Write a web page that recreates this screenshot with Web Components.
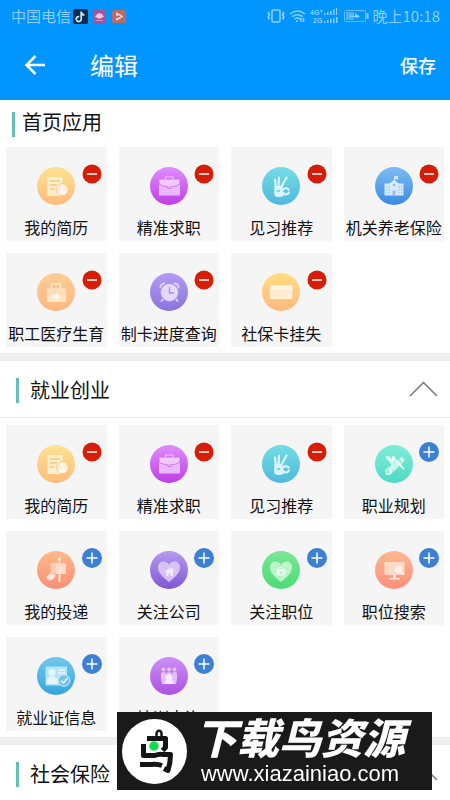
<!DOCTYPE html>
<html lang="zh-CN">
<head>
<meta charset="utf-8">
<meta name="viewport" content="width=device-width, initial-scale=1">
<title>编辑</title>
<style>
  html {
    scrollbar-width: none;
  }
  body {
    margin: 0;
    background: #fff;
    color: #111;
    font-family: "Noto Sans CJK SC", sans-serif;
    font-size: 16px;
  }
</style>
</head>
<body>
<status-bar></status-bar>
<app-bar>编辑</app-bar>
<main>
  <app-section>
    <span slot="title">首页应用</span>
    <app-tile icon="resume" added>我的简历</app-tile>
    <app-tile icon="briefcase" added>精准求职</app-tile>
    <app-tile icon="hand" added>见习推荐</app-tile>
    <app-tile icon="building" added>机关养老保险</app-tile>
    <app-tile icon="medical" added>职工医疗生育</app-tile>
    <app-tile icon="clock" added>制卡进度查询</app-tile>
    <app-tile icon="card" added>社保卡挂失</app-tile>
  </app-section>
  <app-section collapsible>
    <span slot="title">就业创业</span>
    <app-tile icon="resume" added>我的简历</app-tile>
    <app-tile icon="briefcase" added>精准求职</app-tile>
    <app-tile icon="hand" added>见习推荐</app-tile>
    <app-tile icon="plan">职业规划</app-tile>
    <app-tile icon="mailbox">我的投递</app-tile>
    <app-tile icon="company">关注公司</app-tile>
    <app-tile icon="job">关注职位</app-tile>
    <app-tile icon="monitor">职位搜索</app-tile>
    <app-tile icon="idcard">就业证信息</app-tile>
    <app-tile icon="people">培训查询</app-tile>
  </app-section>
  <app-section collapsible>
    <span slot="title">社会保险</span>
  </app-section>
</main>
<site-mark>
  下载鸟资源
  <span slot="url">www.xiazainiao.com</span>
</site-mark>

<script>
// Each icon: gradient top, gradient bottom, artwork on a 38x38 disc
const ICONS = {
  resume: ['#ffe292', '#fdbb7c', `
    <path d="M10.500 10h15v19h-15z" fill="#fff3dc"/>
    <path d="M13 14h10M13 18h7M13 22h4" stroke="#f5c67c" stroke-width="1.300"/>
    <circle cx="25.500" cy="22.500" r="6" fill="#fff0d2" stroke="#f6c481" stroke-width=".8"/>
    <circle cx="25.500" cy="20.500" r="2.200" fill="#fff"/>
    <path d="M21.500 26c0-4.500 8-4.500 8 0-2 2.500-6 2.500-8 0z" fill="#fff"/>`],
  briefcase: ['#dd8dfc', '#c03ee6', `
    <path d="M15.500 12.500v-2.500h7.500v2.500" fill="none" stroke="#f3d3fc" stroke-width="1.200"/>
    <path d="M9 12.500h21v16H9z" fill="#f0c9fa"/>
    <path d="M9 13v4c6 4 15 4 21 0v-4" fill="#f5d9fc" stroke="#c26ae0" stroke-width=".8"/>
    <path d="M17.800 19.500v2h3v-2" fill="#f5d9fc" stroke="#c26ae0" stroke-width=".8"/>`],
  hand: ['#72dde5', '#4eb9dd', `
    <g fill="none" stroke="#eefcff" stroke-linecap="round">
      <path d="M14 21L13 12.500M16.500 20L17 10.500M19 20.500L24.500 10.500" stroke-width="2.200"/>
      <path d="M27 25.500c-1 2-3.500 2.500-5.500 1M26.500 22.500c-1.500-2-4.500-2-6 .5" stroke-width="2.300"/>
    </g>
    <path d="M12.500 19h8.500c-1 3-1 5 1.500 7 .5 2.500-2 4-5.500 4-4.500 0-5-2-4.800-5z" fill="#eefcff"/>
    <path d="M16.500 25.500c-3-2.300-1.500-3.700 0-2.200 1.500-1.500 3 0 0 2.200z" fill="#6fd2e3"/>`],
  building: ['#7dbdf3', '#398be2', `
    <path d="M19.500 14V9.500h3.500l-1 1.300 1 1.200h-3.500" fill="#d8f1ff" stroke="#fff" stroke-width=".7"/>
    <path d="M9.500 16.500h4.500l5-3.500 5 3.500h4.500v12h-19z" fill="#eaf6ff"/>
    <path d="M12 19v7.500M14.500 19v7.500M24 19v7.500M26.500 19v7.500" stroke="#a8d1f5" stroke-dasharray="2 1"/>
    <path d="M17.500 28.500v-4q1.500-2 3 0v4z" fill="#9bcaf4"/>
    <circle cx="19" cy="18" r="1.300" fill="#8ac3f3"/>`],
  medical: ['#fdce98', '#fdb681', `
    <path d="M14.500 15v-4h9v4" fill="none" stroke="#fff0dc" stroke-width="1.300"/>
    <path d="M10 15h19v14H10z" fill="#ffecd8"/>
    <path d="M10 15h19v7H10z" fill="#ffe2c2"/>
    <path d="M19.500 20v7M16 23.500h7" stroke="#fff" stroke-width="2.400"/>`],
  clock: ['#b49bf4', '#8a73dc', `
    <path d="M10.500 14.500q0-3.500 4-4M28.500 14.500q0-3.500-4-4" fill="none" stroke="#e5dcff" stroke-width="2" stroke-linecap="round"/>
    <path d="M13 26l-1.500 2M26 26l1.500 2" stroke="#e5dcff" stroke-width="2" stroke-linecap="round"/>
    <circle cx="19.500" cy="19.500" r="9" fill="#eee7ff" stroke="#a38be7" stroke-width=".8"/>
    <path d="M19.500 14v6h4.500" fill="none" stroke="#aa94e6" stroke-width="1.300"/>`],
  card: ['#ffdd80', '#fdb980', `
    <rect x="8" y="13.500" width="22.500" height="14" rx="1" fill="#eeb375"/>
    <rect x="8" y="12.500" width="22.500" height="14" rx="1" fill="#fff3df"/>
    <path d="M8 13.500q0-1 1-1h20.500q1 0 1 1V17H8z" fill="#fffaf0"/>
    <circle cx="24" cy="22.500" r="1.500" fill="#ffe8c1"/><circle cx="26" cy="22.500" r="1.500" fill="#fff"/>`],
  plan: ['#7eeed8', '#4edac4', `
    <path d="M10 25l13-10 4-3.500 3 4L15 30h-4z" fill="#d7fbf2"/>
    <path d="M13 25v3M16 23.500l2 2.500M24 15l2 2.500" stroke="#65d9c7"/>
    <path d="M10.500 10.500l4 1 5 6-2.500 2-5.500-5.500z" fill="#e8fff9"/>
    <path d="M18.500 13.500L17 21l-1 7M18.500 13.500L29 24" fill="none" stroke="#f4fffc" stroke-width="1.800"/>
    <circle cx="18.500" cy="13" r="2" fill="#fff"/>`],
  mailbox: ['#ffb989', '#f99074', `
    <path d="M16 12h11q2 0 2 2v9H16z" fill="#ffe5d8"/>
    <path d="M13.500 13q4-2 5.500 2v8h-5.500z" fill="#ffd3c0"/>
    <path d="M22.500 7v5" stroke="#ffe5d8" stroke-width="1.500"/><circle cx="22.500" cy="8" r="1.700" fill="#fff0e8"/>
    <path d="M22.500 17v14" stroke="#fff0e8" stroke-width="2"/>
    <path d="M9 26l4-4 6 1-1 4-5 3q-4-1-4-4z" fill="#fff0e8" stroke="#f6a583" stroke-width=".7"/>`],
  company: ['#b49dee', '#8056d5', `
    <path d="M19 31C13 26 8 22 8 16.500 8 9 17 9 19 14c2-5 11-5 11 2.500C30 22 25 26 19 31z" fill="#e2cef8"/>
    <path d="M14.500 21l5-4 1.500 1v-1h2v3l1.500 1H23v4h-2.500v-2.500h-2V25H16v-4z" fill="#fff"/>`],
  job: ['#79e797', '#4cdc75', `
    <path d="M19 31C13 26 8 22 8 16.500 8 9 17 9 19 14c2-5 11-5 11 2.500C30 22 25 26 19 31z" fill="#ccf7d5"/>
    <rect x="14.500" y="18" width="9" height="6.500" fill="#fff"/>
    <path d="M17 18v-1.500h4V18" fill="none" stroke="#fff"/>
    <path d="M19 23l-1.500-1.500q.8-1.500 1.500 0 .8-1.500 1.500 0z" fill="#a9edba"/>`],
  monitor: ['#fdb991', '#fd8e7d', `
    <path d="M9.500 11h20v13h-20z" fill="#ffe3d3"/>
    <path d="M18 24h3v3h4v1.500H14V27h4z" fill="#fff3eb"/>
    <circle cx="23.500" cy="18.500" r="3.500" fill="#fff"/>
    <path d="M26 21l2.500 2.500" stroke="#fff" stroke-width="1.800"/>`],
  idcard: ['#73c8ee', '#35a6dc', `
    <path d="M8.500 9.500H30v19H8.500z" fill="#c3eafa"/>
    <circle cx="15" cy="15.500" r="3.500" fill="#fff"/>
    <path d="M9.500 27v-3q0-4.500 5.500-4.500t5.500 4.500v3z" fill="#fff"/>
    <path d="M21 13h7M21 16h7" stroke="#fff" stroke-width="1.300"/>
    <circle cx="27" cy="23.500" r="5.800" fill="#7cc4e8" stroke="#e8f9ff"/>
    <path d="M24 23.500l2.500 2.500 4-5" fill="none" stroke="#fff" stroke-width="1.500"/>`],
  people: ['#cb91f5', '#ac51e2', `
    <g fill="#ebcdfc">
      <circle cx="13.500" cy="12.500" r="2"/><circle cx="19" cy="12.500" r="2"/><circle cx="24.500" cy="12.500" r="2"/>
      <path d="M11 16q2.500-2 5 0v6l-1 5h-3l-1-5zM16.500 16q2.500-2 5 0v6h-5zM22 16q2.500-2 5 0v6l-1 5h-3l-1-5z"/>
    </g>
    <circle cx="19" cy="20.500" r="3.500" fill="#fff"/>
    <path d="M14.500 27q0-5 4.500-5t4.500 5z" fill="#fff"/>`]
};

class StatusBar extends HTMLElement {
  constructor() {
    super();
    this.attachShadow({ mode: 'open' });
  }

  connectedCallback() {
    this.shadowRoot.innerHTML = `
      <style>
        :host {
          display: flex;
          align-items: center;
          justify-content: space-between;
          height: 32px;
          padding: 0 10px 0 11px;
          background: #0095ff;
          color: #8dcfff;
          font-size: 15px;
          line-height: 24px;
        }
        .side {
          display: flex;
          align-items: center;
          gap: 4px;
        }
        svg {
          display: block;
        }
        .apps {
          display: flex;
          gap: 5px;
          margin-left: -2px;
        }
      </style>
      <div class="side">
        <span>中国电信</span>
        <div class="apps">
          <svg width="15" height="15" viewBox="0 0 15 15">
            <rect width="15" height="15" rx="2" fill="#0b2b51"/>
            <path d="M8.200 2.500v7.500a2.500 2.500 0 1 1-2-2.400M8.200 3q.6 3 3.300 3" fill="none" stroke="#c9eefa" stroke-width="1.700"/>
          </svg>
          <svg width="14" height="15" viewBox="0 0 14 15">
            <rect y="1" width="13" height="13" rx="2" fill="#a35598"/>
            <path d="M6.500 9L2.500 7M6.500 9L4 5M6.500 9V4M6.500 9L9 5M6.500 9l4-2" stroke="#f2c8e6" stroke-width="1.700"/>
            <path d="M3 11.500h7" stroke="#d091bd"/>
          </svg>
          <svg width="14" height="15" viewBox="0 0 14 15">
            <rect y="1" width="14" height="13" rx="2" fill="#b66c6b"/>
            <path d="M5 7V4.500l5 3-5 3V9" fill="none" stroke="#ffe5dd" stroke-width="1.400"/>
          </svg>
        </div>
      </div>
      <div class="side">
        <svg width="18" height="16" viewBox="0 0 18 16" fill="none" stroke="currentColor" stroke-width="1.500">
          <rect x="5" y="2" width="8" height="12" rx="1"/>
          <path d="M2.500 4l-1.500 1.500 1.500 1.500L1 8.500 2.500 10 1 11.500M15.500 4L17 5.500 15.500 7 17 8.500 15.500 10l1.500 1.500"/>
        </svg>
        <svg width="17" height="16" viewBox="0 0 17 16" fill="none" stroke="currentColor" stroke-width="1.600">
          <path d="M1 6q7.500-6 15 0M3.300 8.700q5.200-4 10.400 0M5.800 11q2.700-2 5.400 0"/>
          <path d="M7 13.300h2M12 10v4M14.500 10v4"/>
        </svg>
        <svg width="28" height="18" viewBox="0 0 28 18" fill="currentColor">
          <text x="0" y="8" font-family="Liberation Sans" font-size="7" font-weight="bold">4G</text>
          <path d="M10 4h3M11.500 2.500v3" stroke="currentColor" stroke-width=".8"/>
          <text x="3" y="16" font-family="Liberation Sans" font-size="7" font-weight="bold">2G</text>
          <path d="M14 6h1.500v2H14zM17 5h1.500v3H17zM20 4h1.500v4H20zM23 2h1.500v6H23zM26 1h1v7h-1zM14 14h1.500v2H14zM17 13h1.500v3H17zM20 12h1.500v4H20zM23 11h1.500v5H23zM26 10h1.500v6H26z"/>
        </svg>
        <svg width="27" height="16" viewBox="0 0 27 16" fill="none" stroke="currentColor">
          <rect x="2.500" y="2.500" width="21" height="11" rx="1" stroke="#66beff"/>
          <path d="M4 4h8v8H4z" fill="#48b2ff" stroke="none"/>
          <path d="M8 7.500l5 .5V5l5 3.500-4 2V9H8z" fill="currentColor" stroke="none"/>
          <path d="M25.500 5v6" stroke-width="2"/>
        </svg>
        <span>晚上10:18</span>
      </div>
    `;
  }
}

class AppBar extends HTMLElement {
  constructor() {
    super();
    this.attachShadow({ mode: 'open' });
  }

  connectedCallback() {
    this.shadowRoot.innerHTML = `
      <style>
        :host {
          display: block;
          background: #0095ff;
          color: #fff;
        }
        header {
          display: flex;
          align-items: center;
          height: 68px;
          padding: 0 14px 0 24px;
        }
        h1 {
          flex: 1;
          margin: 0 0 2px 44px;
          font-size: 24px;
          font-weight: 400;
          line-height: 36px;
        }
        button {
          padding: 0;
          border: 0;
          background: none;
          color: inherit;
          font: inherit;
          font-size: 18px;
          font-weight: 500;
          line-height: 26px;
          cursor: pointer;
        }
        .save {
          margin-bottom: 2px;
        }
        svg {
          display: block;
        }
      </style>
      <header>
        <button type="button" aria-label="返回">
          <svg width="22" height="22" viewBox="0 0 22 22" fill="none" stroke="#fff" stroke-width="2.500">
            <path d="M21 10H3M11.500 1l-9 9 9 9"/>
          </svg>
        </button>
        <h1><slot></slot></h1>
        <button class="save" type="button">保存</button>
      </header>
    `;
  }
}

class AppSection extends HTMLElement {
  constructor() {
    super();
    this.attachShadow({ mode: 'open' });
  }

  connectedCallback() {
    const collapsible = this.hasAttribute('collapsible');

    this.shadowRoot.innerHTML = `
      <style>
        :host {
          display: block;
        }
        :host([collapsible]) {
          border-top: 8px solid #efefef;
        }
        .head {
          display: flex;
          align-items: center;
          height: 47px;
          padding: 0 12px;
        }
        :host([collapsible]) .head {
          height: 56px;
          padding: 0 12px 0 16px;
          border-bottom: 1px solid #ececec;
        }
        .head::before {
          content: "";
          width: 3px;
          height: 25px;
          margin-top: 2px;
          background: #67bfba;
        }
        h2 {
          flex: 1;
          margin: 0 0 3px 7px;
          font-size: 20px;
          font-weight: 400;
          line-height: 28px;
        }
        :host([collapsible]) h2 {
          margin: 2px 0 0 11px;
        }
        button {
          padding: 0;
          border: 0;
          background: none;
          cursor: pointer;
        }
        button[aria-expanded="false"] svg {
          transform: rotate(180deg);
        }
        svg {
          display: block;
        }
        .grid {
          display: grid;
          grid-template-columns: repeat(4, 1fr);
          gap: 12px;
          padding: 0 6px 6px;
        }
        :host([collapsible]) .grid {
          padding-top: 7px;
        }
        .grid[hidden] {
          display: none;
        }
      </style>
      <section>
        <div class="head">
          <h2><slot name="title"></slot></h2>
          ${collapsible ? `
            <button type="button" aria-label="展开或收起" aria-expanded="true">
              <svg width="29" height="16" viewBox="0 0 29 16" fill="none" stroke="#777" stroke-width="1.500">
                <path d="M1 15L14.500 1.500 28 15"/>
              </svg>
            </button>` : ''}
        </div>
        <div class="grid"><slot></slot></div>
      </section>
    `;

    if (collapsible) {
      this.shadowRoot.querySelector('button').addEventListener('click', this.toggle.bind(this));
    }
  }

  toggle(event) {
    const grid = this.shadowRoot.querySelector('.grid');
    grid.hidden = !grid.hidden;
    event.currentTarget.setAttribute('aria-expanded', String(!grid.hidden));
  }
}

class AppTile extends HTMLElement {
  constructor() {
    super();
    this.attachShadow({ mode: 'open' });
  }

  connectedCallback() {
    this.render();
  }

  render() {
    const added = this.hasAttribute('added');
    const [top, bottom, art] = ICONS[this.getAttribute('icon')];

    this.shadowRoot.innerHTML = `
      <style>
        :host {
          display: flex;
          flex-direction: column;
          align-items: center;
          gap: 10px;
          position: relative;
          box-sizing: border-box;
          min-width: 0;
          padding: 20px 0 2px;
          background: #f5f5f5;
          line-height: 24px;
          white-space: nowrap;
        }
        svg {
          display: block;
        }
        button {
          position: absolute;
          top: 17px;
          right: 5px;
          padding: 0;
          border: 0;
          background: none;
          cursor: pointer;
        }
      </style>
      <svg width="38" height="38" viewBox="0 0 38 38">
        <defs>
          <linearGradient id="disc" x2="0" y2="1">
            <stop stop-color="${top}"/>
            <stop offset="1" stop-color="${bottom}"/>
          </linearGradient>
        </defs>
        <circle cx="19" cy="19" r="19" fill="url(#disc)"/>
        <g opacity=".86">${art}</g>
      </svg>
      <span><slot></slot></span>
      <button type="button" aria-label="${added ? '移除' : '添加'}">
        <svg width="20" height="20" viewBox="0 0 20 20" stroke="#fff" stroke-width="1.500">
          <circle cx="10" cy="10" r="${added ? 9.5 : 10}" fill="${added ? '#d51d08' : '#3d7fd3'}" stroke="none"/>
          <path d="${added ? 'M5 10h10' : 'M4.500 10h11M10 4.500v11'}"/>
        </svg>
      </button>
    `;

    this.shadowRoot.querySelector('button').addEventListener('click', () => {
      this.toggleAttribute('added');
      this.render();
    });
  }
}

class SiteMark extends HTMLElement {
  constructor() {
    super();
    this.attachShadow({ mode: 'open' });
  }

  connectedCallback() {
    this.shadowRoot.innerHTML = `
      <style>
        :host {
          display: flex;
          align-items: center;
          gap: 8px;
          position: fixed;
          right: 18px;
          bottom: 10px;
          box-sizing: border-box;
          width: 315px;
          height: 78px;
          padding: 0 5px;
          background: #1a1a1a;
          color: #fff;
          white-space: nowrap;
        }
        svg {
          flex: none;
        }
        .text {
          display: flex;
          flex-direction: column;
          align-items: center;
        }
        strong {
          font-size: 42px;
          font-style: italic;
          font-weight: 900;
          line-height: 40px;
        }
        .url {
          padding-top: 6px;
          font-family: "Liberation Sans", sans-serif;
          font-size: 22px;
          line-height: 24px;
        }
      </style>
      <svg width="65" height="65" viewBox="0 0 65 65" fill="none" stroke="#151515" stroke-width="5" stroke-linejoin="round">
        <circle cx="32.500" cy="32.500" r="32.500" fill="#fff" stroke="none"/>
        <path d="M34.500 18v-3c0-5 6-4 5 1v2" stroke-width="2.500"/>
        <path d="M25 19.500h18.500v9l-3 3"/>
        <path d="M21.500 25v11.500h11q5-2 8-1h8q0 8-2.500 16l-4-2"/>
        <path d="M18 45.500h11q6-1 11 1"/>
        <circle cx="32" cy="27" r="4.700" fill="#12dd4b" stroke="none"/>
      </svg>
      <div class="text">
        <strong><slot></slot></strong>
        <span class="url"><slot name="url"></slot></span>
      </div>
    `;
  }
}

customElements.define('status-bar', StatusBar);
customElements.define('app-bar', AppBar);
customElements.define('app-section', AppSection);
customElements.define('app-tile', AppTile);
customElements.define('site-mark', SiteMark);
</script>
</body>
</html>
